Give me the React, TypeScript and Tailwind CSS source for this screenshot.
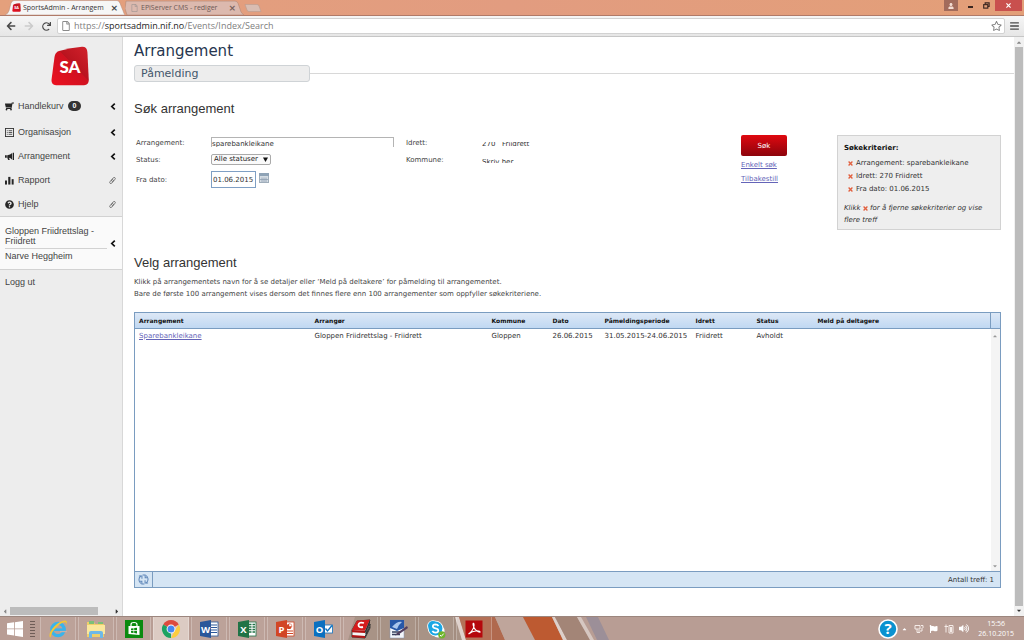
import React from "react";
import {
  FaShoppingCart,
  FaQuestionCircle,
  FaCaretUp,
  FaCaretDown,
  FaCaretLeft,
  FaCaretRight,
  FaArrowLeft,
  FaArrowRight,
  FaRedo,
  FaRegFile,
  FaRegStar,
  FaBars,
  FaUser,
  FaFlag,
  FaVolumeUp,
} from "react-icons/fa";

const UI = "font-['Open_Sans','Noto_Sans',sans-serif]";
const ARIAL = "font-['Liberation_Sans',Arial,sans-serif]";

function SaLogo({ className }: { className: string }) {
  return (
    <svg viewBox="0 0 38 40" className={className} role="img" aria-label="SportsAdmin">
      <defs>
        <linearGradient id="sa-red" x1="0" y1="1" x2="1" y2="0">
          <stop offset="0" stopColor="#ec1020" />
          <stop offset="0.55" stopColor="#cf1220" />
          <stop offset="0.56" stopColor="#b9141f" />
          <stop offset="1" stopColor="#d3222c" />
        </linearGradient>
      </defs>
      <path
        d="M8 5 Q20 1.500 31 .8 Q36 .6 36.400 6 L37.800 34 Q37.800 39 33 39.200 L5 39.200 Q.3 39 .5 34 L3.500 11 Q4.200 6.300 8 5Z"
        fill="url(#sa-red)"
      />
      <text x="19" y="27" textAnchor="middle" fontSize="17" fontWeight="900" fill="#fff" fontFamily="Lato, sans-serif">
        SA
      </text>
    </svg>
  );
}

function TitleBar() {
  return (
    <header className="flex h-4 shrink-0 items-stretch border-b border-[#b07a68] bg-linear-to-r from-[#e4a07c] via-[#e29c80] to-[#e39f78]">
      <div className="flex flex-1 items-end pl-[5px]">
        <div className="relative h-[15px] w-[120px]">
          <svg viewBox="0 0 120 14" className="absolute inset-0 h-full w-full" preserveAspectRatio="none">
            <path d="M0 14 Q3 13 4 10 L6 3 Q7 .5 9 .5 H112 Q114 .5 115 3 L118 10 Q119 13 120 14Z" fill="#f6f6f6" stroke="#b58a78" strokeWidth=".5" />
          </svg>
          <div className="relative flex h-full items-center gap-[2px] pl-[7px] pr-[7px]">
            <SaLogo className="h-[9px] w-[9px]" />
            <span className={`${UI} flex-1 whitespace-nowrap text-[7px] leading-[10px] text-[#333]`}>SportsAdmin - Arrangem</span>
            <button aria-label="Lukk fane" className="text-[9px] leading-[10px] font-bold text-[#444]">×</button>
          </div>
        </div>
        <div className="relative h-[15px] w-[119px]">
          <svg viewBox="0 0 119 14" className="absolute inset-0 h-full w-full" preserveAspectRatio="none">
            <path d="M2 14 L0 8 L1 1 H110 Q112 1 113 3 L116 11 Q117 13 119 14Z" fill="#dcb9ae" stroke="#b58a78" strokeWidth=".6" />
          </svg>
          <div className="relative flex h-full items-center gap-[3px] pl-[6px] pr-[8px]">
            <FaRegFile className="h-2 w-[7px] text-[#a89a96]" />
            <span className={`${UI} flex-1 whitespace-nowrap text-[7px] leading-[10px] text-[#6d5a56]`}>EPiServer CMS - rediger</span>
            <button aria-label="Lukk fane" className="text-[9px] leading-[10px] font-bold text-[#7a625c]">×</button>
          </div>
        </div>
        <svg viewBox="0 0 18 8" className="mb-[3px] h-2 w-[18px]">
          <path d="M1 .5 H13 Q14.500 .5 15 2 L17 7.500 H5 Q3.500 7.500 3 6Z" fill="#d9bdb2" stroke="#b99c90" strokeWidth=".6" />
        </svg>
      </div>
      <button aria-label="Bruker" className="mb-1 flex w-[14px] items-center justify-center bg-[#a26b5b] text-[#f3dcd2]">
        <FaUser className="h-[6px] w-[6px]" />
      </button>
      <button aria-label="Minimer" className="ml-[5px] mb-1 flex w-[14px] items-end justify-center pb-[3px]">
        <span className="h-[2px] w-[5px] bg-[#3a2620]" />
      </button>
      <button aria-label="Gjenopprett" className="mb-1 flex w-[18px] items-center justify-center">
        <svg viewBox="0 0 8 8" className="h-[7px] w-[7px]" fill="none" stroke="#3a2620" strokeWidth="1.300">
          <path d="M2.500 2.500 V1 H7 V5 H5.500" />
          <rect x=".8" y="3" width="4.700" height="4" />
        </svg>
      </button>
      <button aria-label="Lukk" className="mr-[2px] mb-1 flex w-[27px] items-center justify-center bg-[#c9504e]">
        <svg viewBox="0 0 6 6" className="h-[5px] w-[5px]" stroke="#fff" strokeWidth="1.400">
          <path d="M.5 .5 L5.500 5.500 M5.500 .5 L.5 5.500" />
        </svg>
      </button>
    </header>
  );
}

function AddressBar() {
  return (
    <div className="flex h-[21px] shrink-0 items-center border-b border-[#c6c6c6] bg-linear-to-b from-[#f6f6f6] to-[#e6e6e6] pl-[6px] pr-[5px]">
      <button aria-label="Tilbake" className="mr-2"><FaArrowLeft className="h-[10px] w-[10px] text-[#4a4a4a]" /></button>
      <button aria-label="Frem" className="mr-2"><FaArrowRight className="h-[10px] w-[10px] text-[#cbcbcb]" /></button>
      <button aria-label="Last på nytt" className="mr-[6px]"><FaRedo className="h-[9px] w-[9px] text-[#4a4a4a]" /></button>
      <div className="flex h-4 flex-1 items-center gap-1 rounded-xs border border-[#d2d2d2] bg-white pl-1 pr-[2px]">
        <FaRegFile className="h-[10px] w-[8px] text-[#8a8a8a]" />
        <span className={`${UI} flex-1 text-[9px] leading-3 text-[#808080]`}>
          https://<span className="text-[#1c1c1c]">sportsadmin.nif.no</span>/Events/Index/Search
        </span>
        <button aria-label="Bokmerk"><FaRegStar className="h-[10px] w-[11px] text-[#7d7d7d]" /></button>
      </div>
      <button aria-label="Meny" className="ml-[5px]"><FaBars className="h-[10px] w-[9px] text-[#4a4a4a]" /></button>
    </div>
  );
}

const barsIcon = (
  <svg viewBox="0 0 10 10" className="h-[9px] w-[9px]" fill="#262626">
    <rect x="0" y="5" width="2.200" height="4.500" />
    <rect x="3.600" y="1" width="2.400" height="8.500" />
    <rect x="7.400" y="3.500" width="2.200" height="6" />
  </svg>
);

const listIcon = (
  <svg viewBox="0 0 10 10" className="h-[9px] w-[9px]" fill="none" stroke="#333">
    <rect x=".5" y=".5" width="9" height="9" strokeWidth="1" />
    <path d="M2 3H3M4 3H8M2 5H3M4 5H8M2 7H3M4 7H8" strokeWidth=".9" />
  </svg>
);

const hornIcon = (
  <svg viewBox="0 0 10 10" className="h-[9px] w-[9px]" fill="#262626">
    <path d="M0 3.500H2V6.500H0ZM2.500 3.500Q6 3.300 8 1V8.500Q6 6.600 4.500 6.500L5.300 9H3.500L2.500 6.500ZM8.700 .7H10V8.800H8.700Z" />
  </svg>
);

const chevronIcon = (
  <svg viewBox="0 0 6 7" className="h-[7px] w-[6px]" fill="none" stroke="#111" strokeWidth="1.700">
    <path d="M4.800 .7L1.800 3.500L4.800 6.300" />
  </svg>
);

const clipIcon = (
  <svg viewBox="0 0 7 7" className="h-[7px] w-[7px]" fill="none" stroke="#666" strokeWidth=".8">
    <rect x="-.2" y="2.400" width="4.600" height="2.200" rx="1.100" transform="rotate(-50 3.500 3.500)" />
    <rect x="2.600" y="2.400" width="4.600" height="2.200" rx="1.100" transform="rotate(-50 3.500 3.500)" />
  </svg>
);

const MENU = [
  { label: "Handlekurv", icon: <FaShoppingCart className="h-[9px] w-[9px] -scale-x-100" />, badge: "0", link: false },
  { label: "Organisasjon", icon: listIcon, link: false },
  { label: "Arrangement", icon: hornIcon, link: false },
  { label: "Rapport", icon: barsIcon, link: true },
  { label: "Hjelp", icon: <FaQuestionCircle className="h-[9px] w-[9px]" />, link: true },
];

function Sidebar() {
  return (
    <aside className={`${ARIAL} flex w-[123px] shrink-0 flex-col border-r border-[#d8d8d8] bg-[#ededed] text-[9px] leading-[10px] text-[#444]`}>
      <a href="#" className="ml-[51px] mt-[9px] mb-2 w-[38px]"><SaLogo className="h-10 w-[38px]" /></a>
      <nav>
        {MENU.map((m) => (
          <a key={m.label} href="#" className={`flex h-6 items-center pl-[5px] pr-[6px] text-[#262626] ${m.badge ? "mb-[2px]" : ""}`}>
            {m.icon}
            <span className="ml-1 text-[#444]">{m.label}</span>
            {m.badge && (
              <span className="ml-1 rounded-full bg-[#333] px-[5px] text-[7px] font-bold text-white">{m.badge}</span>
            )}
            <span className="ml-auto">{m.link ? clipIcon : chevronIcon}</span>
          </a>
        ))}
      </nav>
      <div className="flex items-center border-y border-[#d2d2d2] bg-[#fafafa] py-2 pl-[5px] pr-[6px]">
        <div className="mr-auto w-[102px]">
          <p className="border-b border-[#d2d2d2] pb-[2px] pt-[1px]">Gloppen Friidrettslag - Friidrett</p>
          <p className="pt-[2px]">Narve Heggheim</p>
        </div>
        {chevronIcon}
      </div>
      <a href="#" className="mt-[7px] pl-[5px]">Logg ut</a>
      <div className="mt-auto flex h-[10px] items-center px-[2px]">
        <FaCaretLeft className="h-[7px] w-[6px] text-[#888]" />
        <div className="ml-[2px] h-2 w-[88px] bg-[#bcbcbc]" />
        <FaCaretRight className="ml-auto h-[7px] w-[6px] text-[#333]" />
      </div>
    </aside>
  );
}

function RemoveMark() {
  return (
    <svg viewBox="0 0 6 6" className="inline h-[5px] w-[5px]" stroke="#e2603f" strokeWidth="1.600">
      <path d="M.7 .7 L5.300 5.300 M5.300 .7 L.7 5.300" />
    </svg>
  );
}

function SearchForm() {
  return (
    <form className="mt-4 flex items-start">
      <div className="grid flex-1 grid-cols-[75px_195px_76px_1fr] items-center gap-y-[6px] pl-[2px] pt-[1px] leading-[10px] text-[#444]">
        <label htmlFor="name" className="pt-[2px]">Arrangement:</label>
        <div className="h-[10px] w-[183px] overflow-hidden border border-b-0 border-[#b4b4b4]">
          <input id="name" defaultValue="sparebankleikane" className="block w-full pt-[1px] leading-[10px] text-[#333] outline-none" />
        </div>
        <label htmlFor="sport" className="pt-[2px]">Idrett:</label>
        <div className="mt-[3px] h-1 overflow-hidden">
          <input id="sport" defaultValue={"270\u00a0\u00a0\u00a0Friidrett"} className="-mt-[3px] block h-[10px] w-20 leading-[10px] text-[#333] outline-none" />
        </div>

        <label htmlFor="status">Status:</label>
        <div className="relative w-[60px]">
          <select id="status" className="block h-[11px] w-full appearance-none rounded-xs border border-[#aaa] bg-[#fafafa] pl-[2px] leading-[9px] text-[#222]">
            <option>Alle statuser</option>
          </select>
          <svg viewBox="0 0 6 6" className="pointer-events-none absolute top-[3px] right-[3px] h-[5px] w-[5px]" fill="#111">
            <path d="M0 .5H6L3 6Z" />
          </svg>
        </div>
        <label htmlFor="place">Kommune:</label>
        <div className="mt-[3px] h-1 overflow-hidden">
          <input id="place" defaultValue="Skriv her" className="-mt-[2px] block h-[10px] w-20 leading-[10px] text-[#333] outline-none" />
        </div>

        <label htmlFor="from">Fra dato:</label>
        <div className="flex items-start gap-[3px]">
          <input id="from" defaultValue="01.06.2015" className="h-[17px] w-[45px] border border-[#7f9fc4] bg-white pl-px text-[#333]" />
          <button type="button" aria-label="Velg dato" className="mt-[2px]">
            <svg viewBox="0 0 10 10" className="h-[10px] w-[10px]">
              <rect x=".5" y=".5" width="9" height="9" fill="#d5dde4" stroke="#9fadba" />
              <rect x="0" y="0" width="10" height="3" fill="#8fa3b6" />
              <path d="M3 4.500V9M5 4.500V9M7 4.500V9M1 6.500H9" stroke="#8fa0b0" strokeWidth=".8" />
            </svg>
          </button>
        </div>
      </div>
      <div className="flex w-24 flex-col items-start gap-1 leading-[10px]">
        <button type="button" className="h-[21px] w-[46px] rounded-xs bg-linear-to-b from-[#e0080f] to-[#8d040c] text-white">Søk</button>
        <a href="#" className="text-[#6464b8] underline">Enkelt søk</a>
        <a href="#" className="text-[#6464b8] underline">Tilbakestill</a>
      </div>
      <section className="w-[164px] border border-[#d2d2d2] bg-[#eee] px-[6px] pt-[6px] pb-[3px] leading-3 text-[#333]">
        <h3 className="font-bold text-[#111]">Søkekriterier:</h3>
        <ul className="mt-[3px] mb-[6px] pl-1 leading-[13px]">
          {["Arrangement: sparebankleikane", "Idrett: 270 Friidrett", "Fra dato: 01.06.2015"].map((t) => (
            <li key={t} className="flex items-center gap-[3px]">
              <RemoveMark />
              {t}
            </li>
          ))}
        </ul>
        <p className="italic">Klikk <RemoveMark /> for å fjerne søkekriterier og vise flere treff</p>
      </section>
    </form>
  );
}

const HEADERS = ["Arrangement", "Arrangør", "Kommune", "Dato", "Påmeldingsperiode", "Idrett", "Status", "Meld på deltagere"];
const ROW = ["Gloppen Friidrettslag - Friidrett", "Gloppen", "26.06.2015", "31.05.2015-24.06.2015", "Friidrett", "Avholdt", ""];

function ResultTable() {
  return (
    <table className="h-full w-full table-fixed border-collapse border border-[#7a9cc0] text-left text-[#333]">
      <colgroup>
        <col className="w-[176px]" />
        <col className="w-[177px]" />
        <col className="w-[61px]" />
        <col className="w-[52px]" />
        <col className="w-[91px]" />
        <col className="w-[61px]" />
        <col className="w-[61px]" />
        <col />
        <col className="w-[10px]" />
      </colgroup>
      <thead>
        <tr className="h-4 border-b border-[#7a9cc0] bg-linear-to-b from-[#dde8f6] to-[#c0d8f2] text-[6px] leading-[10px] text-[#111]">
          {HEADERS.map((h) => (
            <th key={h} className="whitespace-nowrap pl-1 font-bold">{h}</th>
          ))}
          <th className="border-l border-[#7a9cc0]" />
        </tr>
      </thead>
      <tbody>
        <tr className="h-[14px] leading-[10px]">
          <td className="pl-1"><a href="#" className="text-[#6464b8] underline">Sparebankleikane</a></td>
          {ROW.map((c, i) => (
            <td key={i} className="whitespace-nowrap pl-1">{c}</td>
          ))}
          <td className="bg-[#f4f4f4]"><FaCaretUp className="mx-auto h-[6px] w-[6px] text-[#999]" /></td>
        </tr>
        <tr className="h-full">
          <td colSpan={8} />
          <td className="bg-[#f4f4f4] pb-[2px] align-bottom"><FaCaretDown className="mx-auto h-[6px] w-[6px] text-[#999]" /></td>
        </tr>
      </tbody>
      <tfoot>
        <tr className="h-4 border-t border-[#7a9cc0] bg-[#d5e5f4] leading-[10px]">
          <td colSpan={9}>
            <div className="flex h-[15px] items-center">
              <button aria-label="Oppdater" className="flex h-full w-[18px] items-center justify-center border-r border-[#7a9cc0]">
                <svg viewBox="0 0 12 12" className="h-[11px] w-[11px]" fill="none" stroke="#5f86b8" strokeWidth="1.100">
                  <path d="M3.500 10.500A5 5 0 0 1 3 2.200M8.500 1.500A5 5 0 0 1 9 9.800" />
                  <path d="M1 2.200H4.300V5.200M11 9.800H7.700V6.800" />
                  <path d="M5 1H7.800V4H10M7 11H4.200V8H2" />
                </svg>
              </button>
              <span className="ml-auto pr-[6px]">Antall treff: 1</span>
            </div>
          </td>
        </tr>
      </tfoot>
    </table>
  );
}

function TaskButton({ label, active, children }: { label: string; active?: boolean; children: React.ReactNode }) {
  return (
    <button
      aria-label={label}
      className={`flex flex-1 items-center justify-center border-x border-white/25 ${active ? "bg-[#dccbc3]" : "bg-white/5"}`}
    >
      <svg viewBox="0 0 20 20" className="h-5 w-5">{children}</svg>
    </button>
  );
}

function OfficeIcon({ letter, color }: { letter: string; color: string }) {
  return (
    <>
      {letter !== "O" && <rect x="9" y="3" width="10" height="14" fill="#fff" stroke={color} strokeWidth=".8" />}
      {letter === "W" && <path d="M11 6H18M11 8.500H18M11 11H18M11 13.500H18" stroke={color} strokeWidth="1.200" />}
      {letter === "X" && <path d="M12 5.500H14.500M15.500 5.500H18M12 8H14.500M15.500 8H18M12 10.500H14.500M15.500 10.500H18M12 13H14.500M15.500 13H18" stroke={color} strokeWidth="1.600" />}
      {letter === "P" && (
        <>
          <circle cx="14" cy="7.500" r="2.600" fill={color} />
          <path d="M14 7.500V4.500A3 3 0 0 1 17 7.500Z" fill="#fff" stroke={color} strokeWidth=".5" />
          <path d="M11 12H18M11 14.500H18" stroke={color} strokeWidth="1.200" />
        </>
      )}
      {letter === "O" && (
        <>
          <rect x="10" y="6" width="9.500" height="8" fill="#fff" stroke={color} strokeWidth=".8" />
          <path d="M12.500 9.500L14.500 12L19 6.500" fill="none" stroke={color} strokeWidth="1.300" />
        </>
      )}
      <path d="M1 3L12 1V19L1 17Z" fill={color} />
      <text x="6.500" y="13.500" textAnchor="middle" fontSize="9.500" fontWeight="700" fill="#fff" fontFamily="Open Sans, sans-serif">{letter}</text>
    </>
  );
}

function Taskbar() {
  return (
    <footer className="relative flex h-6 shrink-0 items-stretch border-t border-[#9c867e] bg-[#b89d94]">
      <svg viewBox="0 0 1024 24" className="absolute inset-0 h-full w-full" preserveAspectRatio="none">
        <path d="M355 0H455L462 24H348Z" fill="#a38d80" />
        <path d="M455 0H459L466 24H462Z" fill="#ddd0ca" />
        <path d="M459 0H495L505 24H466Z" fill="#b0694e" />
        <path d="M495 0H523L535 24H505Z" fill="#bfa59b" />
        <path d="M523 0H552L563 24H535Z" fill="#bd5a31" />
        <path d="M552 0H555L567 24H563Z" fill="#ddd0ca" />
        <path d="M555 0H577L590 24H567Z" fill="#a38577" />
        <path d="M577 0H581L594 24H590Z" fill="#d6c7c1" />
        <path d="M586 0H598L609 24H597Z" fill="#9c8f98" />
      </svg>
      <div className="relative flex w-full items-stretch">
        <button aria-label="Start" className="flex w-[30px] items-center justify-center">
          <svg viewBox="0 0 16 16" className="h-4 w-4" fill="#fff">
            <path d="M0 2.300L7 1.300V7.500H0ZM7.800 1.200L16 0V7.500H7.800ZM0 8.300H7V14.600L0 13.600ZM7.800 8.300H16V16L7.800 14.700Z" />
          </svg>
        </button>
        <svg viewBox="0 0 5 18" className="my-auto mr-[5px] h-[18px] w-[5px]" stroke="#6f5d57" strokeWidth="1">
          <path d="M0 1.500H5M0 4.500H5M0 7.500H5M0 10.500H5M0 13.500H5M0 16.500H5" />
        </svg>
        <div className="flex w-[452px] items-stretch gap-[2px]">
          <TaskButton label="Internet Explorer">
            <circle cx="10" cy="10.500" r="6.200" fill="none" stroke="#39b4ec" strokeWidth="3.200" />
            <path d="M5 10.700H17.500" stroke="#39b4ec" strokeWidth="2.600" />
            <path d="M12 13.200H19V11.900H12Z" fill="#c8b0a6" />
            <path d="M2 18.500C-1 14 9 2 17 1.500C20 1.500 18.500 5 18 5.800C18.500 3 17 2.500 14 4C8 7 3 14 2.800 18Z" fill="#f3c632" />
          </TaskButton>
          <TaskButton label="Filutforsker">
            <path d="M1 3H8L9 5H18V18H1Z" fill="#f0cf69" />
            <path d="M3 2H8V5H3ZM12 3H17V5H12Z" fill="#7cc078" />
            <path d="M1 6H19V15H1Z" fill="#fae79c" />
            <path d="M3 19V14Q3 12 5 12H15Q17 12 17 14V19H14V15H6V19Z" fill="#6fb8e6" />
          </TaskButton>
          <TaskButton label="Store">
            <rect x="1" y="1" width="18" height="18" fill="#0b8a0f" />
            <path d="M4.500 7H15.500V16L4.500 15Z" fill="#fff" />
            <path d="M7 7V5.500Q7 3.500 10 3.500Q13 3.500 13 5.500V7" fill="none" stroke="#fff" strokeWidth="1.200" />
            <path d="M7 9.500L9.500 9.200V11.300H7ZM10.200 9.100L13 8.800V11.300H10.200ZM7 12H9.500V14L7 13.700ZM10.200 12H13V14.500L10.200 14.100Z" fill="#0b8a0f" />
          </TaskButton>
          <TaskButton label="Chrome" active>
            <path d="M10 10L2.200 5.500A9 9 0 0 1 17.800 5.500Z" fill="#dd4b3e" />
            <path d="M10 10L10 19A9 9 0 0 1 2.200 5.500Z" fill="#1da362" />
            <path d="M10 5.500H17.800L13.500 12L10 19A9 9 0 0 0 17.800 5.500Z" fill="#fccd3f" />
            <circle cx="10" cy="10" r="4.400" fill="#fff" />
            <circle cx="10" cy="10" r="3.500" fill="#4688f1" />
          </TaskButton>
          <TaskButton label="Word"><OfficeIcon letter="W" color="#2a579a" /></TaskButton>
          <TaskButton label="Excel"><OfficeIcon letter="X" color="#207346" /></TaskButton>
          <TaskButton label="PowerPoint"><OfficeIcon letter="P" color="#d24625" /></TaskButton>
          <TaskButton label="Outlook"><OfficeIcon letter="O" color="#0a70c0" /></TaskButton>
          <TaskButton label="Ordbok">
            <path d="M1 11L6 2L19 1L15 12L15 15L19 5V9L14 19L1 18Z" fill="#f5f5f5" stroke="#222" strokeWidth=".8" />
            <path d="M1 11L6 1.500L19 .8L14 11.800Z" fill="#d41c1c" />
            <path d="M1 11L14 11.800V14L1 13.300ZM1 16L14 17V19L1 18.200Z" fill="#b01212" />
            <path d="M14 11.800L19 .8V4L14 14.500ZM14 16.500L19 6.500V9L14 19Z" fill="#333" />
            <path d="M13 4Q8 2.500 7.500 6Q7.500 9 12 8" fill="none" stroke="#fff" strokeWidth="1.800" />
          </TaskButton>
          <TaskButton label="Dokument">
            <rect x="2" y="1" width="14" height="18" fill="#f3f6fb" stroke="#8593ae" strokeWidth=".5" />
            <path d="M2 1H16V9L9 12L2 9Z" fill="#2758a8" />
            <path d="M4 8Q9 2 14 3Q10 6 9 10Z" fill="#a9c5ec" />
            <path d="M4 13H13M4 15.500H12" stroke="#37415e" strokeWidth="1.400" />
            <path d="M19 7L9 14L7 16.500L10.500 15.500L20 9Z" fill="#53405f" />
          </TaskButton>
          <TaskButton label="Skype">
            <circle cx="7" cy="7" r="5.800" fill="#fff" />
            <circle cx="12" cy="12" r="6.500" fill="#fff" />
            <circle cx="9.500" cy="9.500" r="7.800" fill="#fff" />
            <circle cx="6.800" cy="6.800" r="4.800" fill="#1ba7e4" />
            <circle cx="9.500" cy="9.500" r="6.900" fill="#1ba7e4" />
            <path d="M12.500 7Q11.500 5.300 9.500 5.300Q6.800 5.400 6.800 7.300Q6.900 9 9.500 9.400Q12.300 9.900 12.300 11.700Q12.200 13.500 9.500 13.600Q7.200 13.600 6.400 11.800" fill="none" stroke="#fff" strokeWidth="1.700" />
            <circle cx="15.800" cy="15.800" r="3.600" fill="#6fb52b" />
            <path d="M14 16L15.300 17.300L17.700 14.600" fill="none" stroke="#fff" strokeWidth="1" />
          </TaskButton>
          <TaskButton label="Adobe Reader">
            <rect x="1.500" y="1.500" width="17" height="17" fill="#b5080c" />
            <path d="M4.500 15Q9 12 10 7Q10.200 4 9.300 4.200Q8.500 5 10 8.500Q12 12.500 16 13.200Q16.500 12 13 11.700Q8 12 4.500 15Z" fill="none" stroke="#fff" strokeWidth="1.100" />
          </TaskButton>
        </div>
        <div className={`${UI} ml-auto flex items-center text-[7px] leading-[10px] text-white`}>
          <button aria-label="Hjelp" className="mr-1">
            <svg viewBox="0 0 20 20" className="h-5 w-5">
              <circle cx="10" cy="10" r="9" fill="#0a92d0" stroke="#fff" strokeWidth="1.600" />
              <text x="10" y="15.200" textAnchor="middle" fontSize="15" fontWeight="700" fill="#fff" fontFamily="Open Sans, sans-serif">?</text>
            </svg>
          </button>
          <FaCaretUp className="mr-[7px] h-[6px] w-[5px]" />
          <svg viewBox="0 0 10 10" className="mr-[5px] h-[10px] w-[10px]" fill="none" stroke="#f4ebe7" strokeWidth="1">
            <path d="M1 1.500H6V5H1ZM4 7H8V4M7 1.500H9V4M3 5V8.500H6" />
          </svg>
          <FaFlag className="mr-[6px] h-[8px] w-[9px]" />
          <svg viewBox="0 0 10 10" className="mr-[5px] h-[10px] w-[10px]" fill="none" stroke="#f4ebe7" strokeWidth="1">
            <path d="M.5 2.500H4M2 .5V8.500M5 1.500H9V9H5Z" />
            <path d="M7 3V8" strokeWidth="2" />
          </svg>
          <FaVolumeUp className="h-[9px] w-[10px]" />
          <time className="ml-[9px] mr-[10px] text-center">
            <span className="block">15:56</span>
            <span className="block">26.10.2015</span>
          </time>
        </div>
      </div>
    </footer>
  );
}

export default function App() {
  return (
    <div className="flex h-screen flex-col overflow-hidden bg-white font-['DejaVu_Sans',Verdana,sans-serif] text-[7px]">
      <TitleBar />
      <AddressBar />
      <div className="flex min-h-0 flex-1">
        <Sidebar />
        <main className="flex min-w-0 flex-1 flex-col pl-[11px] pt-[4px]">
          <h1 className="text-[15px] leading-5 text-[#26364f]">Arrangement</h1>
          <div className="mt-1 flex items-center">
            <div className="h-[17px] w-[176px] rounded-[3px] border border-[#cfd3d6] bg-[#ededed] pl-[6px] text-[11px] leading-[15px] text-[#43566b]">Påmelding</div>
            <hr className="flex-1 border-[#d8d8d8]" />
          </div>
          <div className="flex min-h-0 flex-1 flex-col pr-[13px] pb-7">
            <h2 className={`${ARIAL} mt-[17px] text-[13px] leading-5 text-[#333]`}>Søk arrangement</h2>
            <SearchForm />
            <h2 className={`${ARIAL} mt-[23px] text-[13px] leading-5 text-[#333]`}>Velg arrangement</h2>
            <p className="mt-[3px] leading-3 text-[#444]">
              Klikk på arrangementets navn for å se detaljer eller ‘Meld på deltakere’ for påmelding til arrangementet.
              <br />
              Bare de første 100 arrangement vises dersom det finnes flere enn 100 arrangementer som oppfyller søkekriteriene.
            </p>
            <div className="mt-3 min-h-0 flex-1">
              <ResultTable />
            </div>
          </div>
        </main>
        <div className="flex w-[10px] shrink-0 flex-col items-center bg-[#f1f1f1] py-[2px]">
          <FaCaretUp className="h-[7px] w-[6px] text-[#888]" />
          <div className="my-px w-2 flex-1 bg-[#bcbcbc]" />
          <FaCaretDown className="h-[7px] w-[6px] text-[#333]" />
        </div>
      </div>
      <Taskbar />
    </div>
  );
}
